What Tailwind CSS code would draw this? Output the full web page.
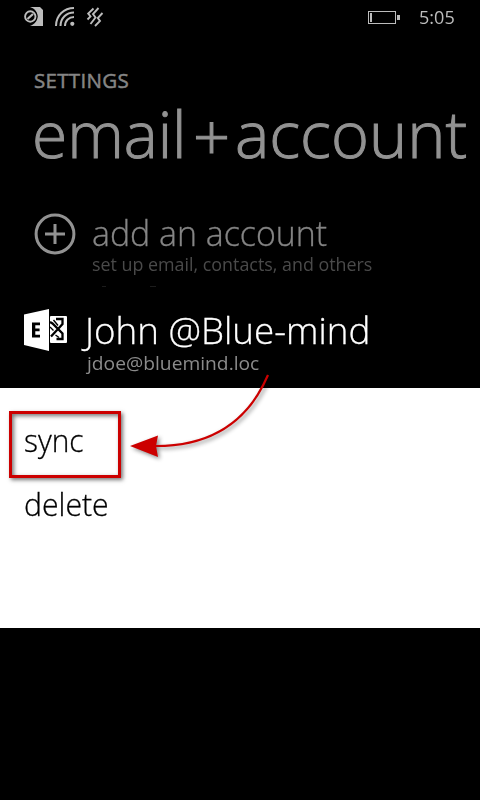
<!DOCTYPE html>
<html lang="en">
<head>
<meta charset="utf-8">
<title>email+accounts</title>
<script src="https://cdn.jsdelivr.net/npm/@tailwindcss/browser@4"></script>
</head>
<body class="bg-black">
<main class="relative flex h-[800px] w-[480px] flex-col overflow-hidden bg-black font-['Open_Sans','Noto_Sans',sans-serif] font-light whitespace-nowrap">
  <header class="flex h-9 shrink-0 items-start pl-6 text-[#bcbcbc]">
    <svg class="mt-[7px] h-5 w-20" viewBox="0 0 80 20" fill="none" stroke="currentColor">
      <path d="M6 0H16L19 3V19H6C11 17 13.500 13.500 13.500 9.500C13.500 5 11 1.500 6 0Z" fill="currentColor" stroke="none"/>
      <circle cx="6.300" cy="9.500" r="7.200" fill="#000" stroke="none"/>
      <circle cx="6.300" cy="9.500" r="5.200" stroke-width="1.900"/>
      <path d="M3.500 12L9 7" stroke-width="2.200"/>
      <path d="M32 19C32 8.500 40 1 50 1M36.500 19C36.500 11 42.500 5.500 50 5.500M41 19C41 13.500 45 10 50 10" stroke-width="2"/>
      <circle cx="48.300" cy="16.800" r="2.100" fill="currentColor" stroke="none"/>
      <path d="M69.500 1.500L64.200 6.500L66.500 9.500L63.500 12.500M74.500 1L69 7L71.500 10.500L66.500 17M78.500 6L73.800 11L76 14L71 19" stroke-width="1.900"/>
    </svg>
    <svg class="mt-[11px] ml-[264px] h-[13px] w-8" viewBox="0 0 32 13" fill="currentColor">
      <path fill-rule="evenodd" d="M0 0H28V13H0ZM1 1V12H27V1Z"/>
      <path d="M2 2H4V11H2ZM29 4H32V9H29Z"/>
    </svg>
    <span class="mt-[5px] ml-[19px] inline-block origin-left scale-x-[.95] text-[19px] leading-6 font-normal">5:05</span>
  </header>

  <section class="h-[252px] shrink-0 pl-[34px] text-[#929292]">
    <h2 class="mt-[34px] w-fit origin-left text-[20.500px] leading-5 font-medium tracking-[.3px] text-[#858585] [-webkit-text-stroke:.5px_#858585]">SETTINGS</h2>
    <h1 class="mt-[11px] flex w-fit text-[65px] leading-[64px] [-webkit-text-stroke:1px_#929292]"><span class="inline-block origin-left -translate-x-0.5 scale-x-[.985]">email</span><span class="inline-block translate-x-[2px] translate-y-[2px]">+</span><span class="inline-block origin-left translate-x-[7px] scale-x-[.997]">account</span></h1>
    <div class="mt-[43px] flex">
      <svg class="mt-[5px] size-[42px] shrink-0" viewBox="0 0 42 42" fill="none" stroke="#929292" stroke-width="3">
        <circle cx="21" cy="21" r="18.900"/>
        <path d="M21 11V31M11 21H31"/>
      </svg>
      <div class="ml-[16px]">
        <p class="mt-[8px] w-fit origin-left scale-x-[.996] text-[34px] leading-[34px] text-[#858585] [-webkit-text-stroke:.3px_#858585]">add an account</p>
        <p class="mt-[5px] w-fit origin-left scale-x-[.992] text-[18px] leading-[18px] font-normal text-[#4a4a4a]">set up email, contacts, and others</p>
        <div class="mt-[13px] ml-[10px] flex gap-11 text-[#1c1c1c]"><i class="h-px w-1 bg-current"></i><i class="h-px w-1.5 bg-current"></i></div>
      </div>
    </div>
  </section>

  <section class="flex h-[100px] shrink-0 pl-6">
    <svg class="mt-[20px] h-[44px] w-[44px] shrink-0" viewBox="0 0 44 44">
      <path fill="#fff" d="M0 6.500L25 1V43L0 37Z"/>
      <path d="M8 14.500H16V17.300H11.300V20.600H15.600V23.300H11.300V26.700H16V29.500H8Z"/>
      <rect x="26" y="8" width="17" height="27" rx="1" fill="#fff"/>
      <path fill="none" stroke="#000" stroke-width="2.300" d="M32 11H38.500V16L34 21L27 28.500M26 14L28.500 15.500L38.500 25.500V31H32.500"/>
      <path fill="none" stroke="#000" stroke-width="1.400" d="M29.500 12L34 17.500M26 19L29.500 22.500M31.500 27L35 29.500"/>
    </svg>
    <div class="ml-[17px]">
      <p class="mt-[25px] w-fit origin-left scale-x-[1.02] text-[36px] leading-[36px] text-white [-webkit-text-stroke:.3px_#fff]">John @Blue-mind</p>
      <p class="mt-[4px] ml-[2px] w-fit origin-left scale-x-[1.012] text-[19px] leading-5 font-normal text-[#8b8b8b]">jdoe@bluemind.loc</p>
    </div>
  </section>

  <section class="flex h-60 shrink-0 flex-col items-start bg-white text-[30.500px] text-black [-webkit-text-stroke:.3px_#000]">
    <div class="mt-[23px] ml-[9px] flex h-[67px] w-[112px] border-[3px] border-[#c00] pl-3 shadow-[2px_2px_4px_#0008,inset_2px_2px_4px_#0008]">
      <span class="mt-[6px] inline-block h-10 origin-left scale-x-[.98] leading-10">sync</span>
    </div>
    <p class="mt-[4px] ml-6 w-fit origin-left scale-x-[.99] leading-[44px]">delete</p>
  </section>

  <svg class="absolute top-[370px] left-[125px] h-[100px] w-[155px] drop-shadow-[2px_2px_2px_#0007]" viewBox="0 0 155 100">
    <path d="M143 5C125 47 92 76 31 76" fill="none" stroke="#c00" stroke-width="2.200"/>
    <path d="M5 76L33 65.500L31 76L33 87Z" fill="#c00"/>
  </svg>
</main>
</body>
</html>
